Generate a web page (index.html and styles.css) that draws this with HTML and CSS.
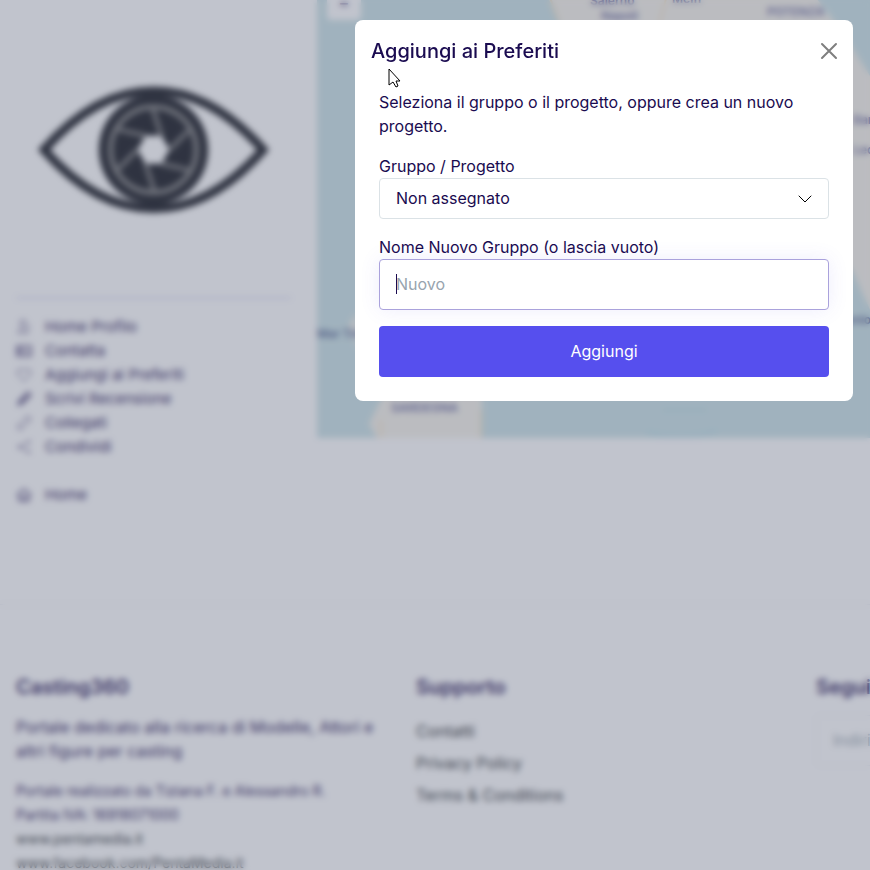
FILE: index.html
```html
<!DOCTYPE html>
<html lang="it">
<head>
  <meta charset="UTF-8">
  <title>Casting360</title>
  <meta name="viewport" content="width=device-width, initial-scale=1.0">
  <link rel="stylesheet" href="styles.css">
</head>
<body>
  <div class="page">
    <main class="profile">
      <aside class="sidebar">
        <svg class="logo" viewBox="0 0 276 140" role="img" aria-label="Logo">
          <path d="M28 70Q80 11 138 11T248 70Q196 129 138 129T28 70Z" fill="none" stroke="#080a12" stroke-width="9"/>
          <circle cx="138" cy="70" r="55" fill="#080a12"/>
          <circle cx="138" cy="70" r="43" fill="none" stroke="#777" stroke-width="5"/>
          <g stroke="#777" stroke-width="4">
            <path d="M146 56L137 28"/>
            <path d="M154 70L175 49"/>
            <path d="M146 84L176 91"/>
            <path d="M130 84L139 112"/>
            <path d="M122 70L101 91"/>
            <path d="M130 56L100 49"/>
          </g>
          <path d="M130 56H146L154 70L146 84H130L122 70Z" fill="#fff"/>
        </svg>
        <hr class="line">
        <nav>
          <ul class="menu">
            <li><a href="#"><svg class="icon thin" viewBox="0 0 16 16"><circle cx="7" cy="4" r="3"/><path d="M2 14c0-6 10-6 10 0zM13 6v4"/></svg>Home Profilo</a></li>
            <li><a href="#"><svg class="icon" viewBox="0 0 16 16"><rect x="1" y="3" width="14" height="10"/><path d="M3 6h4v4H3zM10 7h3M10 10h3"/></svg>Contatta</a></li>
            <li><a href="#"><svg class="icon thin" viewBox="0 0 16 16"><path d="M8 14L2 8C-1 3 5 0 8 4c3-4 9-1 6 4z"/></svg>Aggiungi ai Preferiti</a></li>
            <li><a href="#"><svg class="icon" viewBox="0 0 16 16"><path d="M2 14l1-4 9-9 3 3-9 9zM4 12l8-8"/></svg>Scrivi Recensione</a></li>
            <li><a href="#"><svg class="icon thin" viewBox="0 0 16 16"><path d="M7 5l3-3c3-2 6 1 4 4l-3 3M9 11l-3 3c-3 2-6-1-4-4l3-3M5 11l6-6"/></svg>Collegati</a></li>
            <li><a href="#"><svg class="icon thin" viewBox="0 0 16 16"><path d="M13 3L3 8l10 5"/><circle cx="13" cy="3" r="1"/><circle cx="3" cy="8" r="1"/><circle cx="13" cy="13" r="1"/></svg>Condividi</a></li>
            <li class="home"><a href="#"><svg class="icon" viewBox="0 0 16 16"><path d="M1 8l7-6 7 6M3 7v7h10V7M6 14v-4h4v4"/></svg>Home</a></li>
          </ul>
        </nav>
      </aside>
      <div class="map">
        <svg class="tiles" viewBox="0 0 553 438" preserveAspectRatio="xMinYMin slice">
          <path class="land" d="M228 -10H493L524 30L553 76V310L536 272L480 200L300 120L245 30Z"/>
          <path class="land" d="M60 438L52 424L64 400V380H165V438Z"/>
          <path class="land" d="M32 325L40 312V350Z"/>
          <path class="road" d="M350 -5L342 25M232 -5L242 22M64 438V420M164 438V410"/>
          <path class="deep" d="M330 432C350 438 380 438 400 430M345 410H390"/>
          <text x="273" y="5">Salerno</text>
          <text x="284" y="20">Napoli</text>
          <text x="355" y="3">Melfi</text>
          <text x="450" y="16">POTENZA</text>
          <text x="74" y="412">SARDEGNA</text>
          <text class="sea" x="0" y="338">Mar Tirreno</text>
          <text x="536" y="124">Bari</text>
          <text x="536" y="154">Lecce</text>
          <text class="sea" x="500" y="324">Mar Ionio</text>
        </svg>
        <button class="zoom" type="button">−</button>
      </div>
    </main>
    <footer class="footer">
      <section>
        <h4>Casting360</h4>
        <p>Portale dedicato alla ricerca di Modelle, Attori e altri figure per casting</p>
        <p class="small">Portale realizzato da Tiziana F. e Alessandro R.<br>
          Partita IVA: 16918071000<br>
          <a href="#">www.pentamedia.it</a><br>
          <a href="#">www.facebook.com/PentaMedia.it</a></p>
      </section>
      <section>
        <h4>Supporto</h4>
        <ul class="links">
          <li><a href="#">Contatti</a></li>
          <li><a href="#">Privacy Policy</a></li>
          <li><a href="#">Terms &amp; Conditions</a></li>
        </ul>
      </section>
      <section>
        <h4>Seguici</h4>
        <input class="field" type="email" placeholder="Indirizzo email" aria-label="Indirizzo email">
      </section>
    </footer>
  </div>

  <div class="overlay">
    <div class="modal" role="dialog" aria-labelledby="modal-title">
      <div class="modal-header">
        <h5 id="modal-title">Aggiungi ai Preferiti</h5>
        <button class="close" type="button" aria-label="Chiudi">
          <svg viewBox="0 0 16 16"><path d="M1 1L15 15M15 1L1 15"/></svg>
        </button>
        <svg class="pointer" viewBox="0 0 13 20"><path d="M1 1V17L5 14L8 19L10 18L8 13H12Z"/></svg>
      </div>
      <form class="modal-body">
        <p>Seleziona il gruppo o il progetto, oppure crea un nuovo progetto.</p>
        <div class="group">
          <label for="gruppo">Gruppo / Progetto</label>
          <select id="gruppo" class="select">
            <option>Non assegnato</option>
          </select>
        </div>
        <div class="group">
          <label for="nuovo">Nome Nuovo Gruppo (o lascia vuoto)</label>
          <div class="active">
            <input id="nuovo" class="field" type="text" placeholder="Nuovo">
            <span class="caret"></span>
          </div>
        </div>
        <button class="submit" type="button">Aggiungi</button>
      </form>
    </div>
  </div>
</body>
</html>
```

FILE: styles.css
```css
* {
  box-sizing: border-box;
}
body {
  margin: 0;
  font-family: Inter, "Liberation Sans", sans-serif;
  font-size: 16px;
  line-height: 24px;
  color: #1a0b50;
  background: #fff;
}
h4, h5, p, ul {
  margin: 0;
  padding: 0;
}
ul {
  list-style: none;
}
input, select, button {
  font: inherit;
  color: inherit;
}
.page {
  height: 100vh;
  overflow: hidden;
}

/* profile */
.profile {
  display: flex;
  gap: 26px;
  min-height: 605px;
  border-bottom: 1px solid #eceef2;
}
.sidebar {
  flex: 0 0 291px;
  padding: 80px 0 0 16px;
}
.logo {
  display: block;
  width: 100%;
}
.line {
  margin: 78px 0 16px;
  border: 0;
  border-top: 2px solid #dcdcf4;
}
.menu {
  font-size: 15px;
}
.menu a {
  display: flex;
  align-items: center;
  gap: 13px;
  color: inherit;
  text-decoration: none;
}
.menu .home {
  margin-top: 24px;
}
.icon {
  width: 16px;
  height: 16px;
  fill: none;
  stroke: #1a0b50;
  stroke-width: 1.2;
}
.thin {
  stroke-width: .8;
}
.map {
  position: relative;
  flex: 1;
  height: 438px;
  overflow: hidden;
  background: #c8e1e5;
}
.tiles {
  display: block;
  width: 100%;
  height: 100%;
  font-size: 12px;
  font-weight: 600;
  fill: #66669c;
}
.land {
  fill: #f5f2e9;
}
.road, .deep {
  fill: none;
  stroke: #f6e2c0;
  stroke-width: 2;
}
.deep {
  stroke: #bddde4;
  stroke-width: 5;
}
.sea {
  fill: #506090;
}
.zoom {
  position: absolute;
  top: -14px;
  left: 10px;
  width: 34px;
  height: 34px;
  padding: 0;
  border: 0;
  border-radius: 4px;
  background: #fff;
  font-weight: 700;
}

/* footer */
.footer {
  display: grid;
  grid-template-columns: repeat(3, 376px);
  gap: 24px;
  padding: 70px 16px 0;
}
.footer h4 {
  margin-bottom: 16px;
  font-size: 20px;
  font-weight: 600;
}
.footer p {
  margin-bottom: 16px;
}
.footer .small {
  font-size: 14px;
}
.footer a {
  color: #212529;
  text-decoration: none;
}
.links {
  display: grid;
  gap: 8px;
  padding-top: 4px;
}

/* modal */
.overlay {
  position: fixed;
  inset: 0;
  display: flex;
  justify-content: flex-end;
  align-items: flex-start;
  padding: 20px 17px;
  background: rgba(105, 112, 134, .41);
  backdrop-filter: blur(3px);
}
.modal {
  flex: 0 1 498px;
  border-radius: 8px;
  background: #fff;
}
.modal-header {
  position: relative;
  display: flex;
  justify-content: space-between;
  align-items: center;
  padding: 16px;
}
.modal-header h5 {
  font-size: 20px;
  font-weight: 500;
  line-height: 30px;
}
.close {
  display: flex;
  padding: 0;
  border: 0;
  background: none;
}
.close svg {
  width: 16px;
  height: 16px;
  overflow: visible;
  fill: none;
  stroke: #7f7f7f;
  stroke-width: 2;
  stroke-linecap: round;
}
.pointer {
  position: absolute;
  top: 48px;
  left: 33px;
  width: 13px;
  height: 20px;
  fill: #fff;
  stroke: #000;
}
.modal-body {
  display: grid;
  gap: 16px;
  padding: 8px 24px 24px;
}
.group {
  display: grid;
}
.select {
  appearance: none;
  width: 100%;
  height: 41px;
  padding: 0 16px 2px;
  border: 1px solid #dbe2e6;
  border-radius: 4px;
  background: #fff url("data:image/svg+xml,%3Csvg xmlns='http://www.w3.org/2000/svg' viewBox='0 0 16 16'%3E%3Cpath fill='none' stroke='%23000' stroke-linecap='round' stroke-linejoin='round' d='M2 5l6 6 6-6'/%3E%3C/svg%3E") no-repeat right 15px center / 16px;
}
.field {
  display: block;
  width: 100%;
  height: 51px;
  padding: 0 16px 2px;
  border: 1px solid #eef0f4;
  border-radius: 4px;
  outline: 0;
  background: #fff;
}
.field::placeholder {
  color: #98a4ae;
  opacity: 1;
}
.active {
  position: relative;
}
.active .field {
  border-color: #aaa2dc;
  box-shadow: 0 0 20px rgba(86, 79, 238, .1);
}
.caret {
  position: absolute;
  top: 15px;
  left: 17px;
  width: 1px;
  height: 20px;
  background: #1a0b50;
}
.submit {
  height: 51px;
  padding: 0 16px 2px;
  border: 0;
  border-radius: 4px;
  background: #564fee;
  color: #fff;
}
```
